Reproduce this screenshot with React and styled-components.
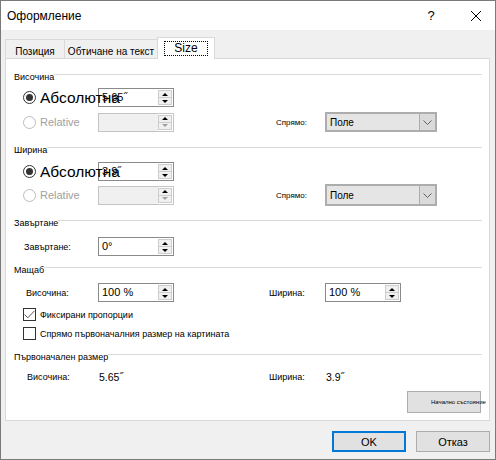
import React from "react";
import styled, {createGlobalStyle} from "styled-components";

const GlobalStyle = createGlobalStyle`
  html, body {
    margin: 0;
    padding: 0;
    background: #ffffff;
  }
  body {
    font-family: "Liberation Sans", Arial, sans-serif;
    color: #000;
  }
`;

const Window = styled.div`
  width: 496px;
  height: 460px;
  box-sizing: border-box;
  border: 1px solid #7a7a7a;
  background: #f0f0f0;
  display: flex;
  flex-direction: column;
`;

const TitleBar = styled.div`
  height: 29px;
  background: #ffffff;
  display: flex;
  align-items: center;
  padding-left: 6px;
  font-size: 12px;
`;

const Title = styled.span`
  flex: 1;
`;

const HelpBtn = styled.span`
  width: 22px;
  font-size: 13px;
  text-align: center;
  margin-right: 29px;
`;

const CloseBtn = styled.span`
  width: 10px;
  height: 10px;
  margin-right: 14px;
  display: flex;
`;

const Body = styled.div`
  flex: 1;
  display: flex;
  flex-direction: column;
  padding: 7px 5px 0 4px;
`;

const Tabs = styled.div`
  display: flex;
  align-items: flex-end;
  height: 21px;
`;

const Tab = styled.div`
  box-sizing: border-box;
  width: ${(p) => p.$w}px;
  height: ${(p) => (p.$active ? 22 : 19)}px;
  margin-left: ${(p) => (p.$first ? 0 : -1)}px;
  margin-bottom: ${(p) => (p.$active ? -1 : 0)}px;
  border: 1px solid #d9d9d9;
  border-bottom: none;
  background: ${(p) => (p.$active ? "#ffffff" : "#f0f0f0")};
  position: relative;
  z-index: ${(p) => (p.$active ? 2 : 0)};
  display: flex;
  justify-content: center;
  align-items: center;
  padding-top: ${(p) => (p.$active ? 0 : 4)}px;
  font-size: ${(p) => (p.$active ? 12 : 10)}px;
`;

const FocusText = styled.span`
  padding: 0 9px;
  height: 13px;
  line-height: 13px;
  outline: 1px dotted #000;
  outline-offset: 0;
`;

const Panel = styled.div`
  box-sizing: border-box;
  height: 363px;
  border: 1px solid #d9d9d9;
  background: #ffffff;
  display: flex;
  flex-direction: column;
  padding: 12px 7px 0 8px;
  position: relative;
  z-index: 1;
`;

const GroupHeader = styled.div`
  display: flex;
  height: 12px;
  margin-top: ${(p) => p.$mt}px;
  font-size: 9px;
  line-height: 12px;
  white-space: nowrap;

  &::after {
    content: "";
    flex: 1;
    height: 1px;
    margin-top: 3px;
    background: #dadada;
  }
`;

const Row = styled.div`
  display: grid;
  grid-template-columns: 74px 171px 56px auto;
  align-items: center;
  height: ${(p) => p.$h}px;
  margin-top: ${(p) => p.$mt}px;
  padding-left: 10px;
  font-size: 9px;
`;

const Choice = styled.div`
  display: flex;
  align-items: center;
  gap: 4px;
  margin-left: -1px;
  white-space: nowrap;
  position: relative;
  z-index: 2;
  font-size: ${(p) => (p.$big ? 15.5 : 11)}px;
  color: ${(p) => (p.$disabled ? "#a0a0a0" : "#000")};
`;

const Radio = styled.span`
  box-sizing: border-box;
  width: 13px;
  height: 13px;
  border-radius: 50%;
  border: 1px solid ${(p) => (p.$disabled ? "#bcbcbc" : "#333")};
  display: flex;
  align-items: center;
  justify-content: center;
  flex-shrink: 0;

  &::after {
    content: "";
    width: 7px;
    height: 7px;
    border-radius: 50%;
    background: #333;
    display: ${(p) => (p.$checked ? "block" : "none")};
  }
`;

const Label = styled.span`
  font-size: ${(p) => p.$size || 9}px;
  padding-left: ${(p) => p.$pl || 0}px;
  white-space: nowrap;
`;

const Field = styled.div`
  box-sizing: border-box;
  width: 76px;
  height: 19px;
  border: 1px solid ${(p) => (p.$disabled ? "#c4c4c4" : "#8a8a8a")};
  background: #ffffff;
  display: flex;
`;

const FieldValue = styled.span`
  flex: 1;
  background: ${(p) => (p.$disabled ? "#f0f0f0" : "transparent")};
  font-size: 11px;
  line-height: 17px;
  padding-left: 3px;
  white-space: nowrap;
`;

const Spinner = styled.div`
  width: 15px;
  display: flex;
  flex-direction: column;
  padding: 1px 1px 1px 0;
  box-sizing: border-box;
`;

const SpinBtn = styled.div`
  flex: 1;
  box-sizing: border-box;
  border: 1px solid #cdcdcd;
  margin-top: ${(p) => (p.$down ? -1 : 0)}px;
  background: #f0f0f0;
  display: flex;
  align-items: center;
  justify-content: center;
`;

const Tri = styled.span`
  width: 0;
  height: 0;
  border-left: 3px solid transparent;
  border-right: 3px solid transparent;
  ${(p) =>
    p.$up
      ? `border-bottom: 3px solid ${p.$color};`
      : `border-top: 3px solid ${p.$color};`}
`;

const Select = styled.div`
  box-sizing: border-box;
  width: 112px;
  height: ${(p) => p.$h}px;
  border: 2px solid #adadad;
  background: #e5e5e5;
  display: flex;
  font-size: 10px;
`;

const SelectText = styled.span`
  flex: 1;
  display: flex;
  align-items: center;
  padding-left: 3px;
`;

const SelectArrow = styled.span`
  width: 15px;
  border-left: 1px solid #adadad;
  background: #dadada;
  display: flex;
  align-items: center;
  justify-content: center;
`;

const CheckRow = styled.div`
  display: flex;
  align-items: center;
  gap: 4px;
  height: 13px;
  margin-top: ${(p) => p.$mt}px;
  padding-left: 9px;
  font-size: 9px;
  white-space: nowrap;
`;

const Box = styled.span`
  box-sizing: border-box;
  width: 13px;
  height: 13px;
  border: 1px solid #333;
  display: flex;
  align-items: center;
  justify-content: center;
`;

const Value = styled.span`
  font-size: 10.5px;
  padding-left: 1px;
`;

const ResetRow = styled.div`
  display: flex;
  justify-content: flex-end;
  margin-top: 7px;
  padding-right: 1px;
`;

const ResetButton = styled.div`
  box-sizing: border-box;
  width: 74px;
  height: 22px;
  border: 1px solid #adadad;
  background: #e1e1e1;
  display: flex;
  align-items: center;
  padding-left: 23px;
  font-size: 6px;
  white-space: nowrap;
`;

const Footer = styled.div`
  display: flex;
  justify-content: flex-end;
  gap: 10px;
  margin-top: 10px;
`;

const Button = styled.div`
  box-sizing: border-box;
  width: 74px;
  height: 21px;
  border: ${(p) => (p.$default ? "2px solid #0078d7" : "1px solid #adadad")};
  background: #e1e1e1;
  display: flex;
  align-items: center;
  justify-content: center;
  font-size: 11px;
`;

const SpinBox = ({value, disabled}) => (
  <Field $disabled={disabled}>
    <FieldValue $disabled={disabled}>{value}</FieldValue>
    <Spinner>
      <SpinBtn>
        <Tri $up $color="#000" />
      </SpinBtn>
      <SpinBtn $down>
        <Tri $color={disabled ? "#a0a0a0" : "#000"} />
      </SpinBtn>
    </Spinner>
  </Field>
);

const Dropdown = ({h}) => (
  <Select $h={h}>
    <SelectText>Поле</SelectText>
    <SelectArrow>
      <svg width="9" height="5" viewBox="0 0 9 5">
        <path d="M0.5 0.5 L4.5 4.5 L8.5 0.5" fill="none" stroke="#606060" strokeWidth="1" />
      </svg>
    </SelectArrow>
  </Select>
);

const SizeGroup = ({title, mt, value, rowMt, row2Mt, row2H}) => (
  <>
    <GroupHeader $mt={mt}>{title}</GroupHeader>
    <Row $h={19} $mt={rowMt}>
      <Choice $big>
        <Radio $checked />
        Абсолютна
      </Choice>
      <SpinBox value={value} />
    </Row>
    <Row $h={row2H} $mt={row2Mt}>
      <Choice $disabled>
        <Radio $disabled />
        Relative
      </Choice>
      <SpinBox disabled value="" />
      <Label $pl={7} $size={8}>Спрямо:</Label>
      <Dropdown h={row2H} />
    </Row>
  </>
);

export default function App() {
  return (
    <>
      <GlobalStyle />
      <Window>
        <TitleBar>
          <Title>Оформление</Title>
          <HelpBtn>?</HelpBtn>
          <CloseBtn>
            <svg width="10" height="10" viewBox="0 0 10 10">
              <path d="M0 0 L10 10 M10 0 L0 10" stroke="#000" strokeWidth="1" />
            </svg>
          </CloseBtn>
        </TitleBar>
        <Body>
          <Tabs>
            <Tab $w={60} $first>Позиция</Tab>
            <Tab $w={94}>Обтичане на текст</Tab>
            <Tab $w={58} $active>
              <FocusText>Size</FocusText>
            </Tab>
          </Tabs>
          <Panel>
            <SizeGroup title="Височина" mt={0} value={"5.65\u02dd"} rowMt={5} row2Mt={5} row2H={20} />
            <SizeGroup title="Ширина" mt={12} value={"3.9\u02dd"} rowMt={6} row2Mt={3} row2H={22} />

            <GroupHeader $mt={11}>Завъртане</GroupHeader>
            <Row $h={19} $mt={8}>
              <Label>Завъртане:</Label>
              <SpinBox value="0°" />
            </Row>

            <GroupHeader $mt={8}>Мащаб</GroupHeader>
            <Row $h={19} $mt={7}>
              <Label $pl={2}>Височина:</Label>
              <SpinBox value="100 %" />
              <Label>Ширина:</Label>
              <SpinBox value="100 %" />
            </Row>
            <CheckRow $mt={6}>
              <Box>
                <svg width="11" height="9" viewBox="0 0 11 9">
                  <path d="M0.5 4.5 L3.8 7.8 L10.5 0.8" fill="none" stroke="#555" strokeWidth="1" />
                </svg>
              </Box>
              Фиксирани пропорции
            </CheckRow>
            <CheckRow $mt={6}>
              <Box />
              Спрямо първоначалния размер на картината
            </CheckRow>

            <GroupHeader $mt={11}>Първоначален размер</GroupHeader>
            <Row $h={14} $mt={7}>
              <Label $pl={3}>Височина:</Label>
              <Value>5.65˝</Value>
              <Label>Ширина:</Label>
              <Value>3.9˝</Value>
            </Row>
            <ResetRow>
              <ResetButton>Начално състояние</ResetButton>
            </ResetRow>
          </Panel>
          <Footer>
            <Button $default>OK</Button>
            <Button>Отказ</Button>
          </Footer>
        </Body>
      </Window>
    </>
  );
}
